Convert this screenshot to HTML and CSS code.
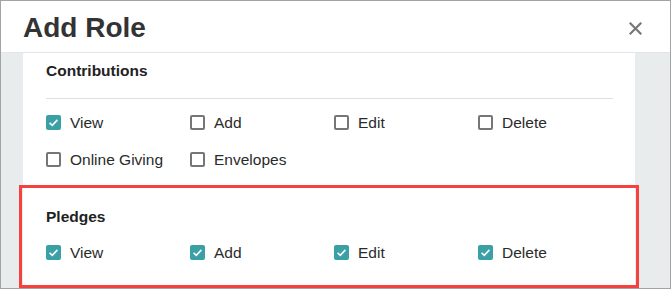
FILE: index.html
```html
<!DOCTYPE html>
<html lang="en">
<head>
<meta charset="utf-8">
<title>Add Role</title>
<link rel="stylesheet" href="styles.css">
</head>
<body>
<div class="frame">
  <header class="header">
    <h1 class="title">Add Role</h1>
    <button class="close" aria-label="Close">
      <svg width="13" height="13" viewBox="0 0 13 13"><path d="M1.5 1.5 L11.5 11.5 M11.5 1.5 L1.5 11.5" stroke="#777" stroke-width="2.2" stroke-linecap="square" fill="none"/></svg>
    </button>
  </header>
  <div class="body">
    <div class="panel">
      <section class="group group-first">
        <h2 class="group-title">Contributions</h2>
        <hr class="divider">
        <div class="grid">
          <label class="opt"><span class="box checked"><svg viewBox="0 0 15 15" width="15" height="15"><path d="M3.6 7.8 L6.3 10.3 L11.4 4.9" stroke="#fff" stroke-width="1.6" fill="none"/></svg></span>View</label>
          <label class="opt"><span class="box"></span>Add</label>
          <label class="opt"><span class="box"></span>Edit</label>
          <label class="opt"><span class="box"></span>Delete</label>
          <label class="opt"><span class="box"></span>Online Giving</label>
          <label class="opt"><span class="box"></span>Envelopes</label>
        </div>
      </section>
      <section class="group group-second">
        <h2 class="group-title">Pledges</h2>
        <div class="grid grid-tight">
          <label class="opt"><span class="box checked"><svg viewBox="0 0 15 15" width="15" height="15"><path d="M3.6 7.8 L6.3 10.3 L11.4 4.9" stroke="#fff" stroke-width="1.6" fill="none"/></svg></span>View</label>
          <label class="opt"><span class="box checked"><svg viewBox="0 0 15 15" width="15" height="15"><path d="M3.6 7.8 L6.3 10.3 L11.4 4.9" stroke="#fff" stroke-width="1.6" fill="none"/></svg></span>Add</label>
          <label class="opt"><span class="box checked"><svg viewBox="0 0 15 15" width="15" height="15"><path d="M3.6 7.8 L6.3 10.3 L11.4 4.9" stroke="#fff" stroke-width="1.6" fill="none"/></svg></span>Edit</label>
          <label class="opt"><span class="box checked"><svg viewBox="0 0 15 15" width="15" height="15"><path d="M3.6 7.8 L6.3 10.3 L11.4 4.9" stroke="#fff" stroke-width="1.6" fill="none"/></svg></span>Delete</label>
        </div>
      </section>
    </div>
  </div>
  <div class="highlight"></div>
</div>
</body>
</html>
```

FILE: styles.css
```css
* { box-sizing: border-box; }
html, body { margin: 0; padding: 0; background: #fff; }
body { font-family: "Liberation Sans", Arial, sans-serif; }

.frame {
  width: 671px;
  height: 289px;
  border: 1px solid #a3a3a3;
  overflow: hidden;
  position: relative;
  display: flex;
  flex-direction: column;
}

.header {
  height: 52px;
  flex: none;
  border-bottom: 1px solid #e3e6e8;
  display: flex;
  align-items: center;
  justify-content: space-between;
  padding: 0 28px 0 22px;
  background: #fff;
}
.title {
  margin: 2px 0 0 0;
  font-size: 28px;
  font-weight: bold;
  color: #333;
  line-height: 32px;
}
.close {
  border: 0;
  background: none;
  padding: 0;
  margin-top: 4px;
  width: 13px;
  height: 13px;
  display: flex;
}

.body {
  flex: 1;
  min-height: 0;
  background: #e9eced;
  padding: 0 35px 0 22px;
  display: flex;
}
.panel {
  flex: 1;
  min-width: 0;
  background: #fff;
  padding: 8px 22px 0 23px;
}

.group-title {
  margin: 0;
  font-size: 15.5px;
  font-weight: bold;
  line-height: 20px;
  color: #222;
}
.divider {
  border: 0;
  border-top: 1px solid #dcdfe1;
  margin: 17px 0 0 0;
  height: 0;
}

.grid {
  display: grid;
  grid-template-columns: 144px 144px 144px 135px;
  row-gap: 16px;
  margin-top: 13px;
}
.grid-tight { margin-top: 15px; }

.group-second { margin-top: 37px; }

.opt {
  display: flex;
  align-items: center;
  gap: 9px;
  height: 21px;
  font-size: 15.5px;
  color: #2a2a2a;
  white-space: nowrap;
}
.box {
  width: 15px;
  height: 15px;
  flex: none;
  border: 2px solid #767676;
  border-radius: 2px;
  display: flex;
}
.box.checked {
  border: 0;
  background: #3b9fa6;
}

.highlight {
  position: absolute;
  left: 18px;
  top: 184px;
  width: 620px;
  height: 103px;
  border: 3px solid #f5423f;
  pointer-events: none;
}
```
